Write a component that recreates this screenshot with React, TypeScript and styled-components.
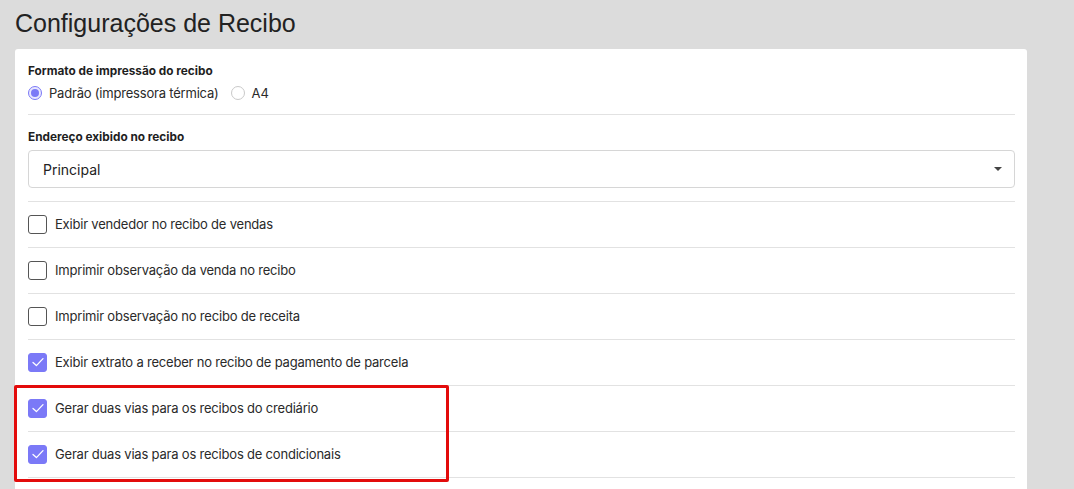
import React, { useState } from "react";
import styled, { createGlobalStyle } from "styled-components";

const accent = "#7b79f7";

const GlobalStyle = createGlobalStyle`
  *, *::before, *::after {
    box-sizing: border-box;
    margin: 0;
    padding: 0;
  }
  body {
    background: #dcdcdc;
    font-family: Inter, "Noto Sans", sans-serif;
    color: #222;
  }
`;

const Page = styled.div`
  padding: 6px 15px 0;
  width: 1042px;
`;

const Title = styled.h1`
  font-family: "Liberation Sans", Arial, sans-serif;
  font-weight: 400;
  font-size: 25px;
  line-height: 34px;
  color: #222;
  margin-bottom: 9px;
`;

const Card = styled.div`
  background: #fff;
  border-radius: 3px;
  padding: 14px 12px 0 13px;
  height: 460px;
`;

const Section = styled.div<{ $pt?: number; $pb?: number }>`
  padding-top: ${(p) => p.$pt ?? 0}px;
  padding-bottom: ${(p) => p.$pb ?? 0}px;
  border-bottom: 1px solid #e2e2e2;
`;

const FieldLabel = styled.div`
  font-size: 11.8px;
  font-weight: 700;
  line-height: 16px;
  color: #1f1f1f;
`;

const RadioGroup = styled.div`
  display: flex;
  align-items: center;
  gap: 12px;
  height: 22px;
  margin-top: 3px;
`;

const RadioOption = styled.label`
  display: flex;
  align-items: center;
  gap: 7px;
  font-size: 13px;
  letter-spacing: -0.2px;
  color: #2a2a2a;
  cursor: pointer;
`;

const RadioDot = styled.span<{ $on: boolean }>`
  width: 14px;
  height: 14px;
  border-radius: 50%;
  border: 1px solid ${(p) => (p.$on ? accent : "#c9c9c9")};
  background: ${(p) => (p.$on ? "#e9e8fe" : "#fff")};
  display: flex;
  align-items: center;
  justify-content: center;
  &::after {
    content: "";
    width: 8px;
    height: 8px;
    border-radius: 50%;
    background: ${(p) => (p.$on ? accent : "transparent")};
  }
`;

const Select = styled.div`
  margin-top: 5px;
  height: 38px;
  border: 1px solid #d6d6d6;
  border-radius: 4px;
  display: flex;
  align-items: center;
  justify-content: space-between;
  padding: 0 12px 0 14px;
  font-size: 14px;
  color: #222;
`;

const Caret = styled.span`
  width: 0;
  height: 0;
  border-left: 4px solid transparent;
  border-right: 4px solid transparent;
  border-top: 4px solid #444;
`;

const Row = styled.label`
  display: flex;
  align-items: center;
  gap: 8px;
  height: 46px;
  padding-bottom: 1px;
  border-bottom: 1px solid #e2e2e2;
  font-size: 13px;
  letter-spacing: -0.2px;
  color: #2a2a2a;
  cursor: pointer;
`;

const Box = styled.span<{ $on: boolean }>`
  width: 19px;
  height: 19px;
  flex: none;
  border-radius: 3px;
  border: 1px solid ${(p) => (p.$on ? accent : "#555")};
  background: ${(p) => (p.$on ? accent : "#fff")};
  display: flex;
  align-items: center;
  justify-content: center;
`;

// red outline drawn around a group of rows
const Highlight = styled.div`
  position: relative;
  &::after {
    content: "";
    position: absolute;
    left: -14px;
    top: -1px;
    width: 435px;
    height: 97px;
    border: 3px solid #e30b0b;
    border-radius: 2px;
    pointer-events: none;
  }
`;

const Check = () => (
  <svg width="14" height="14" viewBox="0 0 14 14" fill="none">
    <path d="M2 7.5 L5.4 10.6 L12 3.6" stroke="#fff" strokeWidth="1.3" strokeLinecap="round" strokeLinejoin="round" />
  </svg>
);

type Opt = { id: string; label: string; on: boolean };

const initial: Opt[] = [
  { id: "vendedor", label: "Exibir vendedor no recibo de vendas", on: false },
  { id: "obsVenda", label: "Imprimir observação da venda no recibo", on: false },
  { id: "obsReceita", label: "Imprimir observação no recibo de receita", on: false },
  { id: "extrato", label: "Exibir extrato a receber no recibo de pagamento de parcela", on: true },
  { id: "crediario", label: "Gerar duas vias para os recibos do crediário", on: true },
  { id: "condicionais", label: "Gerar duas vias para os recibos de condicionais", on: true },
];

export default function App() {
  const [format, setFormat] = useState<"termica" | "a4">("termica");
  const [opts, setOpts] = useState(initial);

  const toggle = (id: string) =>
    setOpts((list) => list.map((o) => (o.id === id ? { ...o, on: !o.on } : o)));

  const renderRow = (o: Opt) => (
    <Row key={o.id} onClick={() => toggle(o.id)}>
      <Box $on={o.on}>{o.on && <Check />}</Box>
      {o.label}
    </Row>
  );

  return (
    <>
      <GlobalStyle />
      <Page>
        <Title>Configurações de Recibo</Title>
        <Card>
          <Section $pb={10}>
            <FieldLabel>Formato de impressão do recibo</FieldLabel>
            <RadioGroup>
              <RadioOption onClick={() => setFormat("termica")}>
                <RadioDot $on={format === "termica"} />
                Padrão (impressora térmica)
              </RadioOption>
              <RadioOption onClick={() => setFormat("a4")}>
                <RadioDot $on={format === "a4"} />
                A4
              </RadioOption>
            </RadioGroup>
          </Section>
          <Section $pt={14} $pb={13}>
            <FieldLabel>Endereço exibido no recibo</FieldLabel>
            <Select>
              Principal
              <Caret />
            </Select>
          </Section>
          {opts.slice(0, 4).map(renderRow)}
          <Highlight>{opts.slice(4).map(renderRow)}</Highlight>
        </Card>
      </Page>
    </>
  );
}
